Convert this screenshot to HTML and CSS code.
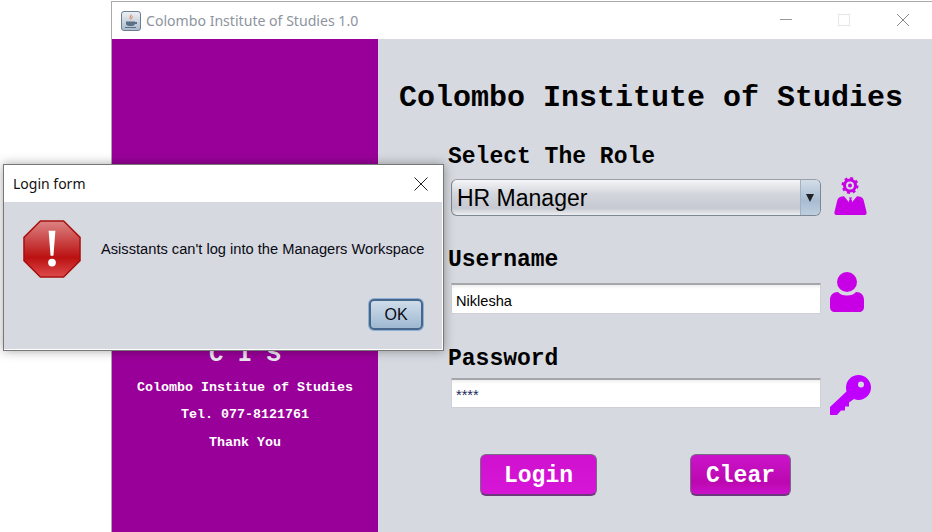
FILE: index.html
```html
<!DOCTYPE html>
<html lang="en">
<head>
  <meta charset="UTF-8">
  <title>Colombo Institute of Studies 1.0</title>
  <link rel="stylesheet" href="styles.css">
</head>
<body>
  <div class="desktop">
    <div class="main-window">
      <div class="titlebar">
        <svg class="app-icon" width="20" height="20" viewBox="0 0 20 20">
          <defs>
            <linearGradient id="appBg" x1="0" y1="0" x2="0" y2="1">
              <stop offset="0" stop-color="#eef1f5"/>
              <stop offset="1" stop-color="#a9bacb"/>
            </linearGradient>
          </defs>
          <rect x="0.5" y="0.5" width="19" height="19" rx="2.5" fill="url(#appBg)" stroke="#6c7f92"/>
          <path d="M10 3c2 2-2 3 0 6-3-2 0-4 0-6zM12 5c0 2-2 2-1 4-1.500-1.500 0-3 1-4z" fill="#d9662a"/>
          <path d="M5 10.500h9v2c0 2-2 2.500-4.500 2.500S5 14.500 5 12.500z" fill="#5b6f86"/>
          <path d="M14 11h2v2h-2M4 16h11v1H4z" fill="#5b6f86"/>
        </svg>
        <span class="app-title">Colombo Institute of Studies 1.0</span>
        <div class="win-controls">
          <svg width="12" height="12" viewBox="0 0 12 12"><path d="M0 5.500h12" stroke="#999" fill="none"/></svg>
          <svg width="12" height="12" viewBox="0 0 12 12"><rect x="0.500" y="0.500" width="11" height="11" stroke="#e6e6e6" fill="none"/></svg>
          <svg class="close-icon" width="12" height="12" viewBox="0 0 12 12"><path d="M0 0l12 12M12 0L0 12" stroke="#8a8a8a" fill="none"/></svg>
        </div>
      </div>
      <div class="window-body">
        <div class="sidebar">
          <div class="cis">C I S</div>
          <div class="side-line">Colombo Institue of Studies</div>
          <div class="side-line">Tel. 077-8121761</div>
          <div class="side-line">Thank You</div>
        </div>
        <div class="content">
          <h1>Colombo Institute of Studies</h1>
          <div class="field role-field">
            <label>Select The Role</label>
            <div class="field-row">
              <div class="combo">
                <span class="combo-value">HR Manager</span>
                <span class="combo-arrow"></span>
              </div>
              <svg class="role-icon" width="34" height="40" viewBox="0 0 34 40">
                <circle cx="16" cy="9.500" r="5.500" fill="none" stroke="#c800e6" stroke-width="3"/>
                <circle cx="16" cy="9.500" r="7.200" fill="none" stroke="#c800e6" stroke-width="2.600" stroke-dasharray="2.830 2.830"/>
                <circle cx="16" cy="9.500" r="2" fill="#c800e6"/>
                <path fill="#c800e6" d="M8 20.500c-3 .5-4.500 2-5 5L.500 36c-.5 2 .5 3 2 3h28c1.500 0 2.500-1 2-3L30 25.500c-.5-3-2-4.500-5-5l-2-.3-5 6-.7-3 .7-1.700h-3l.7 1.700-.7 3-5-6z"/>
                <path fill="#c800e6" d="M15.300 24h2.400l.8 7-2 2-2-2z"/>
              </svg>
            </div>
          </div>
          <div class="field user-field">
            <label>Username</label>
            <div class="field-row">
              <div class="text-box">Niklesha</div>
              <svg class="user-icon" width="34" height="40" viewBox="0 0 34 40">
                <circle cx="17" cy="10" r="10" fill="#c800e6"/>
                <path fill="#c800e6" d="M8 20c2 2.500 5 3.500 9 3.500s7-1 9-3.500c5 0 8 3 8 8v7c0 3-2 5-5 5H5c-3 0-5-2-5-5v-7c0-5 3-8 8-8z"/>
              </svg>
            </div>
          </div>
          <div class="field pass-field">
            <label>Password</label>
            <div class="field-row">
              <div class="text-box pass-box">****</div>
              <svg class="key-icon" width="41" height="40" viewBox="0 0 41 40">
                <path fill-rule="evenodd" fill="#c000ff" d="M28.500 0a12.500 12.500 0 0 1 0 25c-1.500 0-3-.3-4.500-1l-5 3.500v4h-4v4h-4L7 40H0v-8l16.500-15.500c-.3-1-.5-2.500-.5-4C16 5.500 21.500 0 28.500 0zm2.500 6.500a3 3 0 1 0 0 6 3 3 0 0 0 0-6z"/>
              </svg>
            </div>
          </div>
          <div class="actions">
            <div class="action-btn login-btn">Login</div>
            <div class="action-btn clear-btn">Clear</div>
          </div>
        </div>
      </div>
    </div>

    <div class="dialog">
      <div class="dialog-title">
        <span>Login form</span>
        <svg width="14" height="14" viewBox="0 0 14 14"><path d="M.5.500l13 13M13.500.500l-13 13" stroke="#222" fill="none"/></svg>
      </div>
      <div class="dialog-body">
        <div class="dialog-message">
          <svg width="58" height="58" viewBox="0 0 60 60">
            <defs>
              <linearGradient id="stopFill" x1="0" y1="0" x2="0" y2="1">
                <stop offset="0" stop-color="#dc8484"/>
                <stop offset="0.65" stop-color="#bb1111"/>
                <stop offset="1" stop-color="#dd4a4a"/>
              </linearGradient>
            </defs>
            <path d="M18 1h24l17 17v24L42 59H18L1 42V18z" fill="url(#stopFill)" stroke="#a80f0f" stroke-width="1.500"/>
            <path d="M26.500 11h7l-2 26h-3z" fill="#fff"/>
            <circle cx="30" cy="44" r="4" fill="#fff"/>
          </svg>
          <span>Asisstants can't log into the Managers Workspace</span>
        </div>
        <div class="dialog-actions">
          <div class="ok-btn">OK</div>
        </div>
      </div>
    </div>
  </div>
</body>
</html>
```

FILE: styles.css
```css
html, body {
  margin: 0;
  padding: 0;
  background: #fff;
  overflow: hidden;
}

.desktop {
  position: relative;
  width: 932px;
  height: 532px;
  overflow: hidden;
}

/* main window */
.main-window {
  position: absolute;
  left: 111px;
  top: 1px;
  width: 830px;
  height: 540px;
  border: 1px solid #aaa;
  background: #fff;
  display: flex;
  flex-direction: column;
}

.titlebar {
  height: 37px;
  display: flex;
  align-items: center;
  padding-left: 9px;
  background: #fff;
}

.app-title {
  margin: -1px 0 0 5px;
  font-family: "Noto Sans", sans-serif;
  font-size: 14.100px;
  color: #8d949e;
}

.win-controls {
  position: absolute;
  left: 668px;
  top: 12px;
  display: flex;
  gap: 46px;
}

.close-icon {
  margin-left: 1px;
}

.window-body {
  flex: 1;
  display: flex;
}

.sidebar {
  width: 266px;
  height: 493px;
  box-sizing: border-box;
  padding-bottom: 76px;
  background: #990099;
  color: #fff;
  font-family: "Liberation Mono", monospace;
  font-weight: bold;
  display: flex;
  flex-direction: column;
  justify-content: flex-end;
  align-items: center;
}

.cis {
  font-size: 24px;
  line-height: 24px;
  margin-bottom: 7px;
  color: #e8e8ee;
}

.side-line {
  font-size: 13.330px;
  line-height: 27.500px;
}

.content {
  flex: 1;
  height: 493px;
  background: #d6d9df;
  font-family: "Liberation Mono", monospace;
  box-sizing: border-box;
  padding-left: 73px;
}

h1 {
  margin: 40px 0 0 -52px;
  height: 34px;
  font-size: 30px;
  line-height: 38px;
  font-weight: bold;
  color: #000;
}

.field label {
  display: block;
  margin-left: -3px;
  height: 24px;
  font-size: 23px;
  line-height: 28px;
  font-weight: bold;
  color: #000;
}

.field-row {
  display: flex;
  align-items: flex-start;
}

.role-field {
  margin-top: 30px;
}

.role-field .field-row {
  height: 37px;
  margin-top: 12px;
}

.user-field {
  margin-top: 30px;
}

.user-field .field-row {
  height: 31px;
  margin-top: 13px;
}

.pass-field {
  margin-top: 31px;
}

.pass-field .field-row {
  height: 30px;
  margin-top: 9px;
}

.combo {
  width: 370px;
  height: 37px;
  box-sizing: border-box;
  border: 1px solid #7d8791;
  border-top-color: #9a9fa8;
  border-radius: 6px;
  display: flex;
  overflow: hidden;
  background: linear-gradient(#f4f5f7, #d3d6dc 40%, #c6c9d1 80%, #eceef1);
}

.combo-value {
  flex: 1;
  padding-left: 5px;
  font-family: "Liberation Sans", sans-serif;
  font-size: 23px;
  line-height: 37px;
  color: #000;
}

.combo-arrow {
  width: 19px;
  background: linear-gradient(#d3dde8, #a8bdd2 60%, #bdcfdf);
  border-left: 1px solid #9fb2c5;
  position: relative;
}

.combo-arrow::after {
  content: "";
  position: absolute;
  left: 5px;
  top: 14px;
  border-left: 4px solid transparent;
  border-right: 4px solid transparent;
  border-top: 8px solid #222;
}

.role-icon {
  margin: -3px 0 0 13px;
}

.text-box {
  width: 370px;
  height: 31px;
  box-sizing: border-box;
  border: 1px solid #cfd1d6;
  border-top: 2px solid #a5a6a9;
  background: linear-gradient(#eee, #fff 4px);
  padding-left: 4px;
  font-family: "Liberation Sans", sans-serif;
  font-size: 14.600px;
  line-height: 33px;
  color: #000;
}

.user-icon {
  margin: -11px 0 0 9px;
}

.pass-box {
  height: 30px;
  line-height: 30px;
  color: #1a2a5a;
}

.key-icon {
  margin: -3px 0 0 9px;
}

.actions {
  display: flex;
  margin: 46px 0 0 29px;
}

.action-btn {
  height: 42px;
  box-sizing: border-box;
  border: 1px solid #7a6a84;
  border-bottom: 2px solid #6b3a7c;
  border-radius: 6px;
  color: #fff;
  font-size: 23px;
  font-weight: bold;
  line-height: 43px;
  text-align: center;
}

.login-btn {
  width: 117px;
  background: linear-gradient(#cf12cf, #d716d7);
}

.clear-btn {
  width: 101px;
  margin-left: 93px;
  background: linear-gradient(#ca14ca, #bc08b0 70%, #cb12cb);
}

/* message dialog */
.dialog {
  position: absolute;
  left: 3px;
  top: 164px;
  width: 441px;
  height: 187px;
  box-sizing: border-box;
  border: 1px solid #777;
  background: #fff;
  padding: 0 1px 1px 0;
  box-shadow: 0 0 10px rgba(0, 0, 0, 0.35);
  display: flex;
  flex-direction: column;
}

.dialog-title {
  height: 37px;
  flex: none;
  display: flex;
  align-items: center;
  justify-content: space-between;
  padding: 0 14px 0 9px;
  font-family: "Noto Sans", sans-serif;
  font-size: 14px;
  color: #111;
}

.dialog-body {
  flex: 1;
  background: #d6d9df;
  display: flex;
  flex-direction: column;
}

.dialog-message {
  display: flex;
  align-items: center;
  gap: 20px;
  padding: 18px 0 0 19px;
  font-family: "Liberation Sans", sans-serif;
  font-size: 14.670px;
  color: #0a0a14;
}

.dialog-actions {
  display: flex;
  justify-content: flex-end;
  padding: 21px 19px 0 0;
}

.ok-btn {
  width: 50px;
  height: 27px;
  border: 2px solid #47668a;
  border-radius: 5px;
  box-shadow: 0 0 0 1px #8db1d6;
  background: linear-gradient(#cfdcea, #9fb9d1);
  font-family: "Liberation Sans", sans-serif;
  font-size: 16px;
  line-height: 27px;
  text-align: center;
  color: #0a0a14;
}
```
